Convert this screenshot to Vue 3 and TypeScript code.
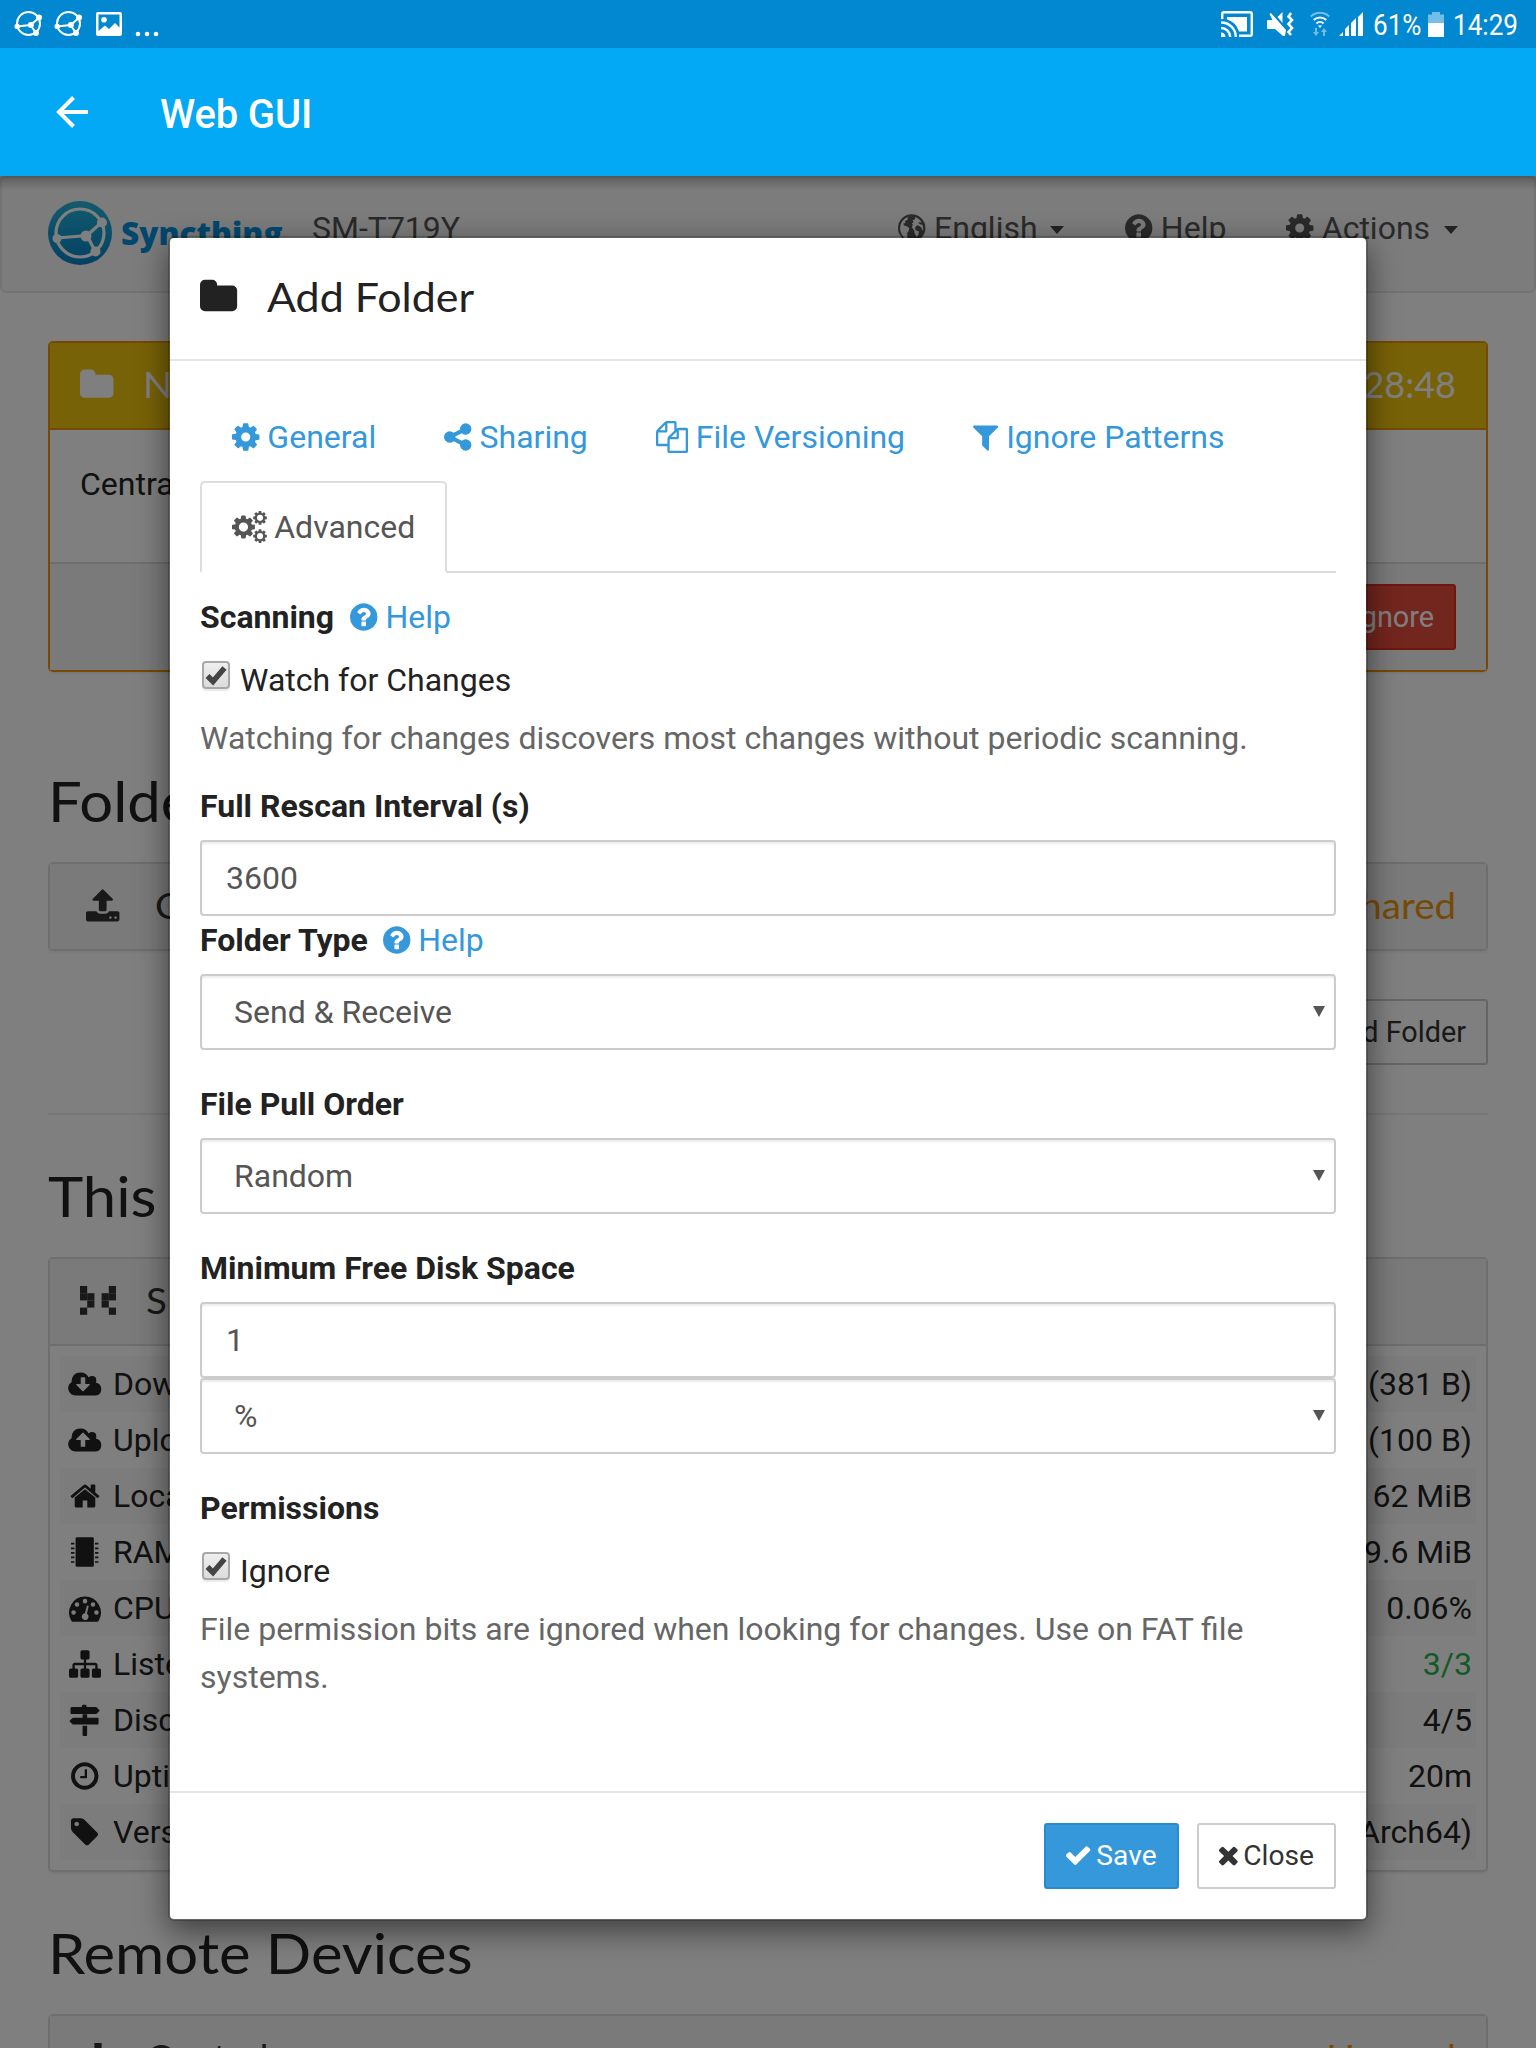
<script setup lang="ts">
import { h } from 'vue'

interface Glyph { x: number; w: number; d: string }

// Outer contour of the gear; the hub is cut out separately so its radius can vary.
const gearRim = 'M1664 787v222q0 12-8 23t-20 13l-185 28q-19 54-39 91 35 50 107 138 10 12 10 25t-9 23q-27 37-99 108t-94 71q-12 0-26-9l-138-108q-44 23-91 38-16 136-29 186-7 28-36 28h-222q-14 0-24.5-8.500t-11.500-21.500l-28-184q-49-16-90-37l-141 107q-10 9-25 9-14 0-25-11-126-114-165-168-7-10-7-23 0-12 8-23 15-21 51-66.500t54-70.500q-27-50-41-99l-183-27q-13-2-21-12.500t-8-23.500v-222q0-12 8-23t19-13l186-28q14-46 39-92-40-57-107-138-10-12-10-24 0-10 9-23 26-36 98.500-107.500t94.500-71.500q13 0 26 10l138 107q44-23 91-38 16-136 29-186 7-28 36-28h222q14 0 24.500 8.500t11.500 21.500l28 184q49 16 90 37l142-107q9-9 24-9 13 0 25 10 129 119 165 170 7 8 7 22 0 12-8 23-15 21-51 66.500t-54 70.500q26 50 41 98l183 28q13 2 21 12.500t8 23.500z'
const gear = (r: number) => `${gearRim}M${896 - r} 896a${r} ${r} 0 1 0 ${2 * r} 0 ${r} ${r} 0 1 0 ${-2 * r} 0z`

const glyphs: Record<string, Glyph> = {
  cog: { x: 128, w: 1536, d: gear(256) },
  help: { x: 128, w: 1536, d: 'M1024 1376v-192q0-14-9-23t-23-9h-192q-14 0-23 9t-9 23v192q0 14 9 23t23 9h192q14 0 23-9t9-23zm256-672q0-88-55.500-163t-138.500-116-170-41q-243 0-371 213-15 24 8 42l132 100q7 6 19 6 16 0 25-12 53-68 86-92 34-24 86-24 48 0 85.500 26t37.500 59q0 38-20 61t-68 45q-63 28-115.500 86.500t-52.500 125.500v36q0 14 9 23t23 9h192q14 0 23-9t9-23q0-19 21.500-49.500t54.500-49.500q32-18 49-28.500t46-35 44.500-48 28-60.500 12.500-81zm384 192q0 209-103 385.500t-279.500 279.500-385.500 103-385.500-103-279.500-279.500-103-385.500 103-385.500 279.500-279.500 385.500-103 385.500 103 279.500 279.500 103 385.500z' },
  share: { x: 128, w: 1536, d: 'M1344 1024q133 0 226.500 93.500t93.500 226.500-93.500 226.500-226.500 93.500-226.500-93.500-93.500-226.500q0-12 2-34l-360-180q-92 86-218 86-133 0-226.500-93.500t-93.500-226.500 93.500-226.500 226.500-93.500q126 0 218 86l360-180q-2-22-2-34 0-133 93.500-226.500t226.500-93.500 226.500 93.500 93.500 226.500-93.500 226.500-226.500 93.500q-126 0-218-86l-360 180q2 22 2 34t-2 34l360 180q92-86 218-86z' },
  files: { x: 0, w: 1792, d: 'M1696 384q40 0 68 28t28 68v1216q0 40-28 68t-68 28h-960q-40 0-68-28t-28-68v-288h-544q-40 0-68-28t-28-68v-672q0-40 20-88t48-76l408-408q28-28 76-48t88-20h416q40 0 68 28t28 68v328q68-40 128-40h416zm-544 213l-299 299h299v-299zm-640-384l-299 299h299v-299zm196 647l316-316v-416h-384v416q0 40-28 68t-68 28h-416v640h512v-256q0-40 20-88t48-76zm956 804v-1152h-384v416q0 40-28 68t-68 28h-416v640h896z' },
  filter: { x: 192, w: 1408, d: 'M1595 295q17 41-14 70l-493 493v742q0 42-39 59-13 5-25 5-27 0-45-19l-256-256q-19-19-19-45v-486l-493-493q-31-29-14-70 17-39 59-39h1280q42 0 59 39z' },
  check: { x: 64, w: 1664, d: 'M1671 566q0 40-28 68l-724 724-136 136q-28 28-68 28t-68-28l-136-136-362-362q-28-28-28-68t28-68l136-136q28-28 68-28t68 28l294 295 656-657q28-28 68-28t68 28l136 136q28 28 28 68z' },
  times: { x: 240, w: 1312, d: 'M1490 1322q0 40-28 68l-136 136q-28 28-68 28t-68-28l-294-294-294 294q-28 28-68 28t-68-28l-136-136q-28-28-28-68t28-68l294-294-294-294q-28-28-28-68t28-68l136-136q28-28 68-28t68 28l294 294 294-294q28-28 68-28t68 28l136 136q28 28 28 68t-28 68l-294 294 294 294q28 28 28 68z' },
  folder: { x: 64, w: 1664, d: 'M1728 608v704q0 92-66 158t-158 66h-1216q-92 0-158-66t-66-158v-960q0-92 66-158t158-66h320q92 0 158 66t66 158v32h672q92 0 158 66t66 158z' },
  upload: { x: 64, w: 1664, d: 'M1344 1472q0-26-19-45t-45-19-45 19-19 45 19 45 45 19 45-19 19-45zm256 0q0-26-19-45t-45-19-45 19-19 45 19 45 45 19 45-19 19-45zm128-224v320q0 40-28 68t-68 28h-1472q-40 0-68-28t-28-68v-320q0-40 28-68t68-28h427q21 56 70.500 92t110.500 36h256q61 0 110.500-36t70.500-92h427q40 0 68 28t28 68zm-325-648q-17 40-59 40h-256v448q0 26-19 45t-45 19h-256q-26 0-45-19t-19-45v-448h-256q-42 0-59-40-17-39 14-69l448-448q18-19 45-19t45 19l448 448q31 30 14 69z' },
  home: { x: 0, w: 1792, d: 'M1472 992v480q0 26-19 45t-45 19h-384v-384h-256v384h-384q-26 0-45-19t-19-45v-480q0-1 .5-3t.5-3l575-474 575 474q1 2 1 6zm223-69l-62 74q-8 9-21 11h-3q-13 0-21-7l-692-577-692 577q-12 8-24 7-13-2-21-11l-62-74q-8-10-7-23.500t11-21.500l719-599q32-26 76-26t76 26l244 204v-195q0-14 9-23t23-9h192q14 0 23 9t9 23v408l219 182q10 8 11 21.500t-7 23.500z' },
  sitemap: { x: 0, w: 1792, d: 'M1792 1248v320q0 40-28 68t-68 28h-320q-40 0-68-28t-28-68v-320q0-40 28-68t68-28h96v-192h-512v192h96q40 0 68 28t28 68v320q0 40-28 68t-68 28h-320q-40 0-68-28t-28-68v-320q0-40 28-68t68-28h96v-192h-512v192h96q40 0 68 28t28 68v320q0 40-28 68t-68 28h-320q-40 0-68-28t-28-68v-320q0-40 28-68t68-28h96v-192q0-52 38-90t90-38h512v-192h-96q-40 0-68-28t-28-68v-320q0-40 28-68t68-28h320q40 0 68 28t28 68v320q0 40-28 68t-68 28h-96v192h512q52 0 90 38t38 90v192h96q40 0 68 28t28 68z' },
  tag: { x: 128, w: 1536, d: 'M576 448q0-53-37.500-90.500t-90.500-37.500-90.500 37.500-37.500 90.500 37.500 90.500 90.500 37.500 90.500-37.500 37.500-90.500zm1067 576q0 53-37 90l-491 492q-39 37-91 37-53 0-90-37l-715-716q-38-37-64.500-101t-26.500-117v-416q0-52 38-90t90-38h416q53 0 117 26.500t102 64.500l715 714q37 39 37 91z' },
  clock: { x: 128, w: 1536, d: 'M1024 544v448q0 14-9 23t-23 9h-320q-14 0-23-9t-9-23v-64q0-14 9-23t23-9h224v-352q0-14 9-23t23-9h64q14 0 23 9t9 23zm416 352q0-148-73-273t-198-198-273-73-273 73-198 198-73 273 73 273 198 198 273 73 273-73 198-198 73-273zm224 0q0 209-103 385.500t-279.500 279.500-385.500 103-385.500-103-279.500-279.500-103-385.500 103-385.500 279.500-279.500 385.500-103 385.500 103 279.500 279.500 103 385.500z' },
  cloudDown: { x: -64, w: 1920, d: 'M400 1536A400 400 0 0 1 190 800Q192 256 700 256Q1010 256 1150 530Q1230 450 1330 450Q1580 450 1580 700Q1580 760 1555 805Q1856 880 1856 1170Q1856 1536 1480 1536ZM1216 928q0-32-32-32h-224v-352q0-32-32-32h-192q-32 0-32 32v352h-224q-32 0-32 32 0 13 10 24l350 350q22 18 46 0l352-352q10-10 10-22z' },
  cloudUp: { x: -64, w: 1920, d: 'M400 1536A400 400 0 0 1 190 800Q192 256 700 256Q1010 256 1150 530Q1230 450 1330 450Q1580 450 1580 700Q1580 760 1555 805Q1856 880 1856 1170Q1856 1536 1480 1536ZM1216 864q0-12-10-24l-350-350q-22-18-46 0l-352 352q-10 10-10 22 0 32 32 32h224v352q0 32 32 32h192q32 0 32-32v-352h224q32 0 32-32z' },
  chip: { x: 128, w: 1536, d: 'M128 384h192v96h-192zM128 640h192v96h-192zM128 896h192v96h-192zM128 1152h192v96h-192zM128 1408h192v96h-192zM1472 384h192v96h-192zM1472 640h192v96h-192zM1472 896h192v96h-192zM1472 1152h192v96h-192zM1472 1408h192v96h-192zM464 64h864q80 0 80 80v1504q0 80-80 80h-864q-80 0-80-80v-1504q0-80 80-80z' },
  gauge: { x: 0, w: 1792, d: 'M896 256A896 896 0 0 1 1660 1610Q1630 1664 1580 1664H212Q162 1664 132 1610A896 896 0 0 1 896 256ZM128 1152a128 128 0 1 0 256 0 128 128 0 1 0-256 0zM320 704a128 128 0 1 0 256 0 128 128 0 1 0-256 0zM768 512a128 128 0 1 0 256 0 128 128 0 1 0-256 0zM1216 704a128 128 0 1 0 256 0 128 128 0 1 0-256 0zM1408 1152a128 128 0 1 0 256 0 128 128 0 1 0-256 0zM1004 768l-118 420a190 190 0 1 0 118 26l96-410q-20-60-96-36z' },
  signs: { x: 64, w: 1664, d: 'M1710 343q10 10 10 23t-10 23l-141 141q-28 28-68 28h-1344q-26 0-45-19t-19-45v-256q0-26 19-45t45-19h576v-64q0-26 19-45t45-19h128q26 0 45 19t19 45v64h512q40 0 68 28zM768 1216h256v512q0 26-19 45t-45 19h-128q-26 0-45-19t-19-45zM1600 768q26 0 45 19t19 45v256q0 26-19 45t-45 19h-1344q-40 0-68-28l-141-141q-10-10-10-23t10-23l141-141q28-28 68-28h512v-192h256v192z' },
  globe: { x: 128, w: 1536, d: 'M896 128A768 768 0 1 0 896 1664A768 768 0 1 0 896 128ZM760 250L640 330 700 380 600 470 500 520 560 620 420 640 470 760 620 800 760 900 720 1080 640 1180 660 1420 560 1480Q250 1300 240 896Q260 420 760 250ZM1100 280Q1330 360 1460 600L1360 560 1260 620 1380 700 1500 720Q1560 900 1530 1060L1420 860 1250 740 1120 800 1080 960 1200 1060 1300 1080 1280 1250 1180 1400 1060 1200 1030 1020 900 860 960 720 900 640 1010 560 940 470 1080 400Z' },
}

// Font-sized glyph: one em high, sits on the text baseline like a letter.
const Fa = (p: { name: string }) => {
  const g = glyphs[p.name]
  return h('svg', { class: 'fa', viewBox: `${g.x} 0 ${g.w} 1792`, style: { width: `${(g.w / 1792).toFixed(4)}em` } }, [
    h('path', { d: g.d, fill: 'currentColor', 'fill-rule': 'evenodd' }),
  ])
}
Fa.props = ['name']

const tabs = [
  { icon: 'cog', label: 'General' },
  { icon: 'share', label: 'Sharing' },
  { icon: 'files', label: 'File Versioning' },
  { icon: 'filter', label: 'Ignore Patterns' },
]

const stats = [
  { icon: 'cloudDown', label: 'Download Rate', value: '0 B/s (381 B)' },
  { icon: 'cloudUp', label: 'Upload Rate', value: '0 B/s (100 B)' },
  { icon: 'home', label: 'Local State (Total)', value: '62 MiB' },
  { icon: 'chip', label: 'RAM Utilization', value: '19.6 MiB' },
  { icon: 'gauge', label: 'CPU Utilization', value: '0.06%' },
  { icon: 'sitemap', label: 'Listeners', value: '3/3', ok: true },
  { icon: 'signs', label: 'Discovery', value: '4/5' },
  { icon: 'clock', label: 'Uptime', value: '20m' },
  { icon: 'tag', label: 'Version', value: 'Linux (AArch64)' },
]

const identSelf = [[0, 0], [4, 0], [0, 1], [1, 1], [3, 1], [4, 1], [1, 2], [3, 2], [0, 3], [4, 3]]
const identRemote = [[2, 0], [1, 1], [2, 1], [3, 1]]
</script>

<template>
  <div class="screen">
    <header class="status">
      <div class="status-left">
        <svg v-for="n in 2" :key="n" class="st-sync" viewBox="0 0 28 28">
          <g fill="none" stroke="#fff" stroke-width="2">
            <circle cx="14.500" cy="13.500" r="11.500" />
            <path d="M3 16.500 16.500 15 25.500 7.500M16.500 15 22 23" />
          </g>
          <g fill="#fff"><circle cx="3.200" cy="16.500" r="2.700" /><circle cx="16.800" cy="15" r="3" /><circle cx="25" cy="7.500" r="3" /><circle cx="22" cy="23" r="3" /></g>
        </svg>
        <svg class="st-img" viewBox="0 0 26 24"><path fill="#fff" fill-rule="evenodd" d="M2 0h22q2 0 2 2v20q0 2-2 2H2q-2 0-2-2V2q0-2 2-2zM2.500 2.500v16.500l6.500-5.500 4 3.500 6-6 4.500 4.500V2.500zM8 5a2.800 2.800 0 1 1 0 5.600A2.800 2.800 0 0 1 8 5z" /></svg>
        <svg class="st-dots" viewBox="0 0 24 6"><g fill="#fff"><circle cx="3" cy="3" r="2.300" /><circle cx="12" cy="3" r="2.300" /><circle cx="21" cy="3" r="2.300" /></g></svg>
      </div>
      <div class="status-right">
        <svg class="st-cast" viewBox="0 0 32 26">
          <g fill="none" stroke="#fff" stroke-width="2.400">
            <path d="M1.200 8V3q0-1.800 1.800-1.800h26q1.800 0 1.800 1.800v20q0 1.800-1.800 1.800H18" />
            <path d="M0 11.500A14.500 14.500 0 0 1 14.800 26M0 17a9 9 0 0 1 9.200 9" />
          </g>
          <path fill="#fff" d="M0 21.500A4.500 4.500 0 0 1 4.500 26H0zM6 6h20v14.500h-8Q15 11 6 8.500z" />
        </svg>
        <svg class="st-mute" viewBox="0 0 27 24">
          <path fill="#fff" d="M1 8h4.500L2.500 2 4 1l15 17-1 6h-2l-8-7H1Q0 17 0 16V9q0-1 1-1zM10.500 5l5-5v11z" />
          <path d="M24 1l-2.500 3.500L25 8l-3.500 4 3.500 4-3.500 4 2.500 3" fill="none" stroke="#fff" stroke-width="2.600" />
        </svg>
        <svg class="st-wifi" viewBox="0 0 20 24">
          <g fill="none" stroke="#fff" stroke-width="2">
            <path opacity=".45" d="M.8 4.500a13 13 0 0 1 18.400 0" /><path d="M3.800 8a9 9 0 0 1 12.400 0M6.500 11.500a5 5 0 0 1 7 0" />
          </g>
          <path fill="#fff" d="M8 13.500h4L10 16z" />
          <path fill="#fff" opacity=".45" d="M5 16h2v4h2l-3 4-3-4h2zM13 24h2v-4h2l-3-4-3 4h2z" />
        </svg>
        <svg class="st-signal" viewBox="0 0 24 24"><path fill="#fff" d="M0 24l4-4v4zM6 17l4-4v11H6zM12 11l5-5v18h-5zM19 5l5-5v24h-5z" /></svg>
        <span class="st-text pct"><span>61%</span></span>
        <svg class="st-batt" viewBox="0 0 16 25"><path fill="#fff" opacity=".45" d="M4 0h8v2.500h4V11H0V2.500h4z" /><path fill="#fff" d="M0 11h16v14H0z" /></svg>
        <span class="st-text clk"><span>14:29</span></span>
      </div>
    </header>

    <header class="appbar">
      <svg class="back" viewBox="0 0 32 32"><path d="M32 16H3M17.500 1.500 3 16l14.500 14.500" fill="none" stroke="#fff" stroke-width="4" /></svg>
      <h1>Web GUI</h1>
    </header>

    <main class="web">
      <div class="page">
        <nav class="navbar">
          <div class="brand">
            <svg class="logo" viewBox="0 0 64 64">
              <defs><linearGradient id="lg" x1="0" y1="0" x2="0" y2="1"><stop offset="0" stop-color="#26b6db" /><stop offset="1" stop-color="#0882c8" /></linearGradient></defs>
              <circle cx="32" cy="32" r="32" fill="url(#lg)" />
              <g fill="none" stroke="#fff" stroke-width="3.200"><circle cx="32" cy="32" r="24" /><path d="M9 37 39 34.500 54 21M39 34.500 47 50" /></g>
              <g fill="#fff"><circle cx="9" cy="37.500" r="4.500" /><circle cx="38" cy="35" r="5.500" /><circle cx="54" cy="21.500" r="5" /><circle cx="47.500" cy="50.500" r="5" /></g>
            </svg>
            <span class="brand-name">Syncthing</span>
          </div>
          <span class="device">SM-T719Y</span>
          <ul class="menu">
            <li class="m-lang"><Fa name="globe" /> English <i class="caret" /></li>
            <li class="m-help"><Fa name="help" /> Help</li>
            <li class="m-act"><Fa name="cog" /> Actions <i class="caret" /></li>
          </ul>
        </nav>

        <section class="panel notice">
          <div class="phead"><Fa name="folder" /><span class="ptitle">New Folder</span><span class="pright time">14:28:48</span></div>
          <div class="pbody">Central wants to share a folder.</div>
          <div class="pfoot"><button class="btn danger">Ignore</button></div>
        </section>

        <h3 class="h-folders">Folders</h3>
        <section class="panel folder">
          <div class="phead"><Fa name="upload" /><span class="ptitle">Camera</span><span class="pright warn">Unshared</span></div>
        </section>
        <div class="right"><button class="btn">Add Folder</button></div>
        <hr />

        <h3 class="h-this">This Device</h3>
        <section class="panel device-panel">
          <div class="phead">
            <svg class="ident" viewBox="0 0 5 5"><rect v-for="(c, i) in identSelf" :key="i" :x="c[0]" :y="c[1]" width="1" height="1" fill="currentColor" /></svg>
            <span class="ptitle">SM-T719Y</span>
          </div>
          <div class="table">
            <div v-for="s in stats" :key="s.label" class="row">
              <span class="ico"><Fa :name="s.icon" /></span><span>{{ s.label }}</span><span class="val" :class="{ ok: s.ok }">{{ s.value }}</span>
            </div>
          </div>
        </section>

        <h3 class="h-remote">Remote Devices</h3>
        <section class="panel remote">
          <div class="phead">
            <svg class="ident" viewBox="0 0 5 5"><rect v-for="(c, i) in identRemote" :key="i" :x="c[0]" :y="c[1]" width="1" height="1" fill="currentColor" /></svg>
            <span class="ptitle">Central</span><span class="pright warn">Unused</span>
          </div>
        </section>
      </div>

      <div class="backdrop">
        <div class="modal">
          <div class="mhead"><Fa name="folder" /><h4>Add Folder</h4></div>
          <div class="mbody">
            <ul class="tabs">
              <li v-for="t in tabs" :key="t.label"><Fa :name="t.icon" /> {{ t.label }}</li>
              <li class="active">
                <svg class="fa cogs" viewBox="0 0 1920 1792">
                  <path :d="gear(310)" fill="currentColor" fill-rule="evenodd" transform="translate(-107 149) scale(.835)" />
                  <path :d="gear(340)" fill="currentColor" fill-rule="evenodd" transform="translate(1122 -64) scale(.5)" />
                  <path :d="gear(340)" fill="currentColor" fill-rule="evenodd" transform="translate(1122 960) scale(.5)" />
                </svg> Advanced
              </li>
            </ul>
            <div class="line scanning"><b>Scanning</b><a><Fa name="help" /> Help</a></div>
            <label class="check c1"><span class="box"><svg viewBox="0 0 28 28"><path d="M5.500 15 11 20.500 22.500 7" fill="none" stroke="#444" stroke-width="5.500" /></svg></span>Watch for Changes</label>
            <p class="note">Watching for changes discovers most changes without periodic scanning.</p>
            <div class="line l-full"><b>Full Rescan Interval (s)</b></div>
            <div class="input">3600</div>
            <div class="line l-type"><b>Folder Type</b><a><Fa name="help" /> Help</a></div>
            <div class="input select">Send &amp; Receive<i /></div>
            <div class="line gap"><b>File Pull Order</b></div>
            <div class="input select">Random<i /></div>
            <div class="line gap"><b>Minimum Free Disk Space</b></div>
            <div class="input">1</div>
            <div class="input select">%<i /></div>
            <div class="line gap perm"><b>Permissions</b></div>
            <label class="check c2"><span class="box"><svg viewBox="0 0 28 28"><path d="M5.500 15 11 20.500 22.500 7" fill="none" stroke="#444" stroke-width="5.500" /></svg></span>Ignore</label>
            <p class="note">File permission bits are ignored when looking for changes. Use on FAT file systems.</p>
          </div>
          <div class="mfoot">
            <button class="btn primary"><Fa name="check" /> Save</button>
            <button class="btn"><Fa name="times" /> Close</button>
          </div>
        </div>
      </div>
    </main>
  </div>
</template>

<style>
body { margin: 0; }
.fa { display: inline-block; height: 1em; vertical-align: -0.143em; overflow: visible; flex: none; }
</style>

<style scoped>
* { box-sizing: border-box; }
.screen { width: 1536px; height: 2048px; overflow: hidden; display: flex; flex-direction: column; font: 32px/48px Roboto, sans-serif; color: #222; background: #fff; }
h1, h3, h4, p, ul { margin: 0; padding: 0; font-weight: 400; list-style: none; }

.status { height: 48px; flex: none; background: #0288d1; display: flex; justify-content: space-between; color: #fff; }
.status-left, .status-right { display: flex; align-items: flex-start; }
.status-left { padding-left: 14px; }
.st-sync { width: 28px; height: 28px; margin: 10px 12px 0 0; }
.st-img { width: 26px; height: 24px; margin: 12px 0 0 2px; }
.st-dots { width: 24px; height: 6px; margin: 31px 0 0 13px; }
.status-right { padding-right: 18px; }
.st-cast { width: 32px; height: 26px; margin: 11px 14px 0 0; }
.st-mute { width: 27px; height: 24px; margin: 12px 16px 0 0; }
.st-wifi { width: 20px; height: 24px; margin: 12px 9px 0 0; }
.st-signal { width: 24px; height: 24px; margin: 12px 10px 0 0; }
.st-text { font-size: 30px; line-height: 49px; height: 48px; }
.st-text span { display: inline-block; transform: scaleX(.87); transform-origin: 0 50%; }
.pct { width: 49px; white-space: nowrap; }
.clk { width: 65px; white-space: nowrap; }
.st-batt { width: 16px; height: 25px; margin: 12px 9px 0 6px; }

.appbar { height: 128px; flex: none; background: #03a9f4; display: flex; align-items: center; color: #fff; padding-left: 56px; }
.back { width: 32px; height: 32px; }
.appbar h1 { margin: 5px 0 0 72px; font-size: 40px; font-weight: 500; letter-spacing: -.15px; }

.web { flex: 1; position: relative; overflow: hidden; }
.navbar { height: 117px; background: #f8f8f8; border: 2px solid #e7e7e7; border-radius: 6px; display: flex; color: #555; padding: 23px 76px 0 46px; }
.brand { display: flex; width: 235px; height: 64px; }
.logo { width: 64px; height: 64px; flex: none; }
.brand-name { font: 800 31.500px/48px "Open Sans", sans-serif; color: #0590dc; margin: 8px 0 0 9px; }
.device { margin: 3px 0 0 29px; }
.menu { display: flex; margin: 3px 0 0 auto; white-space: nowrap; }
.m-lang .fa { margin: 0 .5px 0 -.5px; }
.m-help { margin-left: 61px; }
.m-act { margin-left: 60px; }
.caret { display: inline-block; border: 7.500px solid transparent; border-top: 8px solid #444; border-bottom: 0; margin-left: 5px; vertical-align: 5px; }
.m-act .caret { margin-left: 6px; }

.panel { margin: 0 48px; border: 2px solid #ddd; border-radius: 5px; box-shadow: 0 2px 2px rgba(0,0,0,.05); }
.phead { display: flex; align-items: center; height: 85px; padding: 0 30px; background: #f5f5f5; font: 36px/40px Lato, sans-serif; color: #333; }
.phead span { padding-bottom: 4px; transform: scaleX(1.07); }
.ptitle { margin-left: 30px; transform-origin: 0 50%; }
.pright { margin-left: auto; transform-origin: 100% 50%; }
.phead .time { transform: none; }
.warn { color: #ec950c; }
.notice { margin-top: 48px; height: 331px; border-color: #ec950c; }
.notice .phead { height: 87px; background: #f1c40f; color: #fff; border-bottom: 2px solid #ec950c; }
.notice .phead .fa { margin-top: -2px; }
.notice .pbody { height: 132px; padding: 30px; }
.notice .pfoot { height: 108px; border-top: 2px solid #ddd; background: #f5f5f5; display: flex; justify-content: flex-end; padding: 20px 30px; }
h3 { margin: 0 48px; font: 56px/64px Lato, sans-serif; color: #222; transform: scaleX(1.068); transform-origin: 0 50%; }
.h-folders { padding-top: 97px; height: 190px; }
.folder { height: 89px; }
.folder .fa { margin: -2px 0 0 6px; }
.folder .ptitle { margin-left: 36px; }
.right { display: flex; justify-content: flex-end; padding: 48px 48px 0; }
hr { margin: 48px 48px 0; border: 0; border-top: 2px solid #eee; }
.h-this { padding-top: 49px; height: 142px; word-spacing: 5px; }
.device-panel { height: 615px; }
.device-panel .phead { height: 87px; border-bottom: 2px solid #ddd; }
.ident { width: 36px; height: 36px; margin-top: 5px; }
.table { padding: 10px; }
.row { height: 56px; padding: 4px 4px 4px 5px; display: flex; }
.row:nth-child(odd) { background: #f9f9f9; }
.ico { width: 39px; text-align: center; margin-right: 9px; display: flex; justify-content: center; }
.ico .fa { margin-top: 8px; }
.val { margin-left: auto; }
.ok { color: #29b54a; }
.h-remote { padding-top: 49px; height: 142px; }

.btn { height: 66px; border: 2px solid #ccc; border-radius: 3px; background: #fff; color: #333; font: 28.800px/42px Roboto, sans-serif; padding: 0 20px; white-space: nowrap; }
.danger { background: #e74c3c; border-color: #df2e1b; color: #fff; }
.primary { background: #3498db; border-color: #258cd1; color: #fff; }

.backdrop { position: absolute; inset: 0; background: linear-gradient(rgba(0,0,0,.25), transparent 14px), rgba(0,0,0,.5); }
.modal { position: absolute; left: 168px; top: 60px; width: 1200px; height: 1685px; background: #fff; background-clip: padding-box; border: 2px solid rgba(0,0,0,.2); border-radius: 6px; box-shadow: 0 10px 30px rgba(0,0,0,.5); display: flex; flex-direction: column; }
.mhead { height: 123px; border-bottom: 2px solid #e5e5e5; padding: 38px 30px; display: flex; font: 40px/44px Lato, sans-serif; }
.mhead h4 { font: inherit; margin: -1px 0 0 30px; transform: scaleX(1.074); transform-origin: 0 50%; }
.mhead .fa { margin-top: 1px; }
.mbody { flex: 1; padding: 30px; }
.tabs { display: flex; flex-wrap: wrap; border-bottom: 2px solid #ddd; color: #3498db; }
.tabs li { height: 92px; margin: 0 4px -2px 0; padding: 20px 30px; border: 2px solid transparent; border-radius: 5px 5px 0 0; white-space: nowrap; }
.tabs .active { color: #555; background: #fff; border-color: #ddd; border-bottom-color: #fff; }
.cogs { width: 1.0714em; }
.line { height: 48px; }
.line a { color: #3498db; margin-left: 16px; }
.l-type a { margin-left: 15px; }
.scanning { margin-top: 20px; }
.check { display: flex; height: 48px; }
.c1 { margin-top: 15px; }
.box { width: 28px; height: 28px; margin: 5px 10px 0 2px; border: 2px solid #a8a8a8; border-radius: 4px; background: linear-gradient(#eee, #dcdcdc); box-shadow: 0 2px 1px rgba(0,0,0,.08); }
.box svg { display: block; width: 28px; height: 28px; margin: -2px; }
.note { margin-top: 10px; color: #666; }
.l-full { margin-top: 20px; margin-bottom: 10px; }
.l-type { margin-bottom: 10px; }
.gap { margin: 30px 0 10px; }
.perm { margin-bottom: 15px; }
.input { height: 76px; border: 2px solid #ccc; border-radius: 4px; box-shadow: inset 0 2px 2px rgba(0,0,0,.075); padding: 12px 24px; color: #555; display: flex; justify-content: space-between; }
.select { padding: 12px 9px 12px 32px; }
.select i { border: 6px solid transparent; border-top: 11px solid #555; border-bottom: 0; margin-top: 18px; height: 0; }
.mfoot { height: 128px; border-top: 2px solid #e5e5e5; padding: 30px; display: flex; justify-content: flex-end; gap: 18px; }
.mfoot .btn { padding: 0 20px 0 19px; font-size: 28.200px; word-spacing: -2px; }
</style>
